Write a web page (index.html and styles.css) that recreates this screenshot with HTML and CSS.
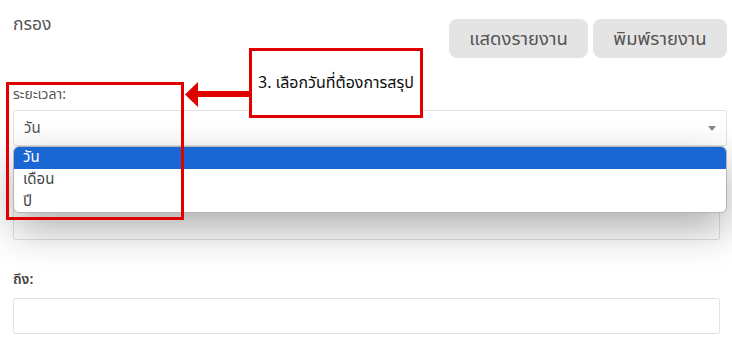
FILE: index.html
```html
<!DOCTYPE html>
<html lang="th">
<head>
<meta charset="utf-8">
<link rel="stylesheet" href="styles.css">
</head>
<body>
<div class="page">
  <div class="header">
    <h2 class="title">กรอง</h2>
    <div class="actions">
      <button class="btn btn-show">แสดงรายงาน</button>
      <button class="btn btn-print">พิมพ์รายงาน</button>
    </div>
  </div>

  <div class="field field-period">
    <label class="label">ระยะเวลา:</label>
    <div class="select">
      <span class="select-value">วัน</span>
      <span class="caret"></span>
    </div>
    <ul class="dropdown">
      <li class="option active">วัน</li>
      <li class="option">เดือน</li>
      <li class="option">ปี</li>
    </ul>
  </div>

  <div class="field field-from">
    <label class="label">จาก:</label>
    <div class="input"></div>
  </div>

  <div class="field field-to">
    <label class="label label-bold">ถึง:</label>
    <div class="input"></div>
  </div>

  <div class="hl-box"></div>
  <svg class="hl-arrow" width="66" height="26" viewBox="0 0 66 26">
    <polygon points="0,12.5 13,0 13,9 66,9 66,15 13,15 13,25" fill="#e00000"/>
  </svg>
  <div class="note">3. เลือกวันที่ต้องการสรุป</div>
</div>
</body>
</html>
```

FILE: styles.css
```css
* { box-sizing: border-box; }
html, body { margin: 0; padding: 0; background: #fff; }
body {
  font-family: "Noto Sans Thai", "Noto Sans", "DejaVu Sans", sans-serif;
  color: #555;
  width: 732px;
  height: 357px;
  overflow: hidden;
}
.page {
  position: relative;
  padding: 0 5px 0 13px;
}
.header {
  display: flex;
  justify-content: space-between;
  align-items: flex-start;
  height: 82px;
}
.title {
  margin: 13px 0 0 0;
  font-size: 17.5px;
  font-weight: 400;
  color: #555;
  line-height: 24px;
}
.actions {
  display: flex;
  gap: 5px;
  margin-top: 19px;
}
.btn {
  font-family: inherit;
  font-size: 18.5px;
  color: #555;
  background: #e4e4e4;
  border: none;
  border-radius: 8px;
  height: 39px;
  padding: 0;
}
.btn-show { width: 139px; }
.btn-print { width: 134px; }

.field { position: relative; }
.label {
  display: block;
  font-size: 14px;
  color: #555;
  line-height: 20px;
}
.field-period { padding-top: 3px; }
.field-period .label { margin-bottom: 5px; }
.select {
  height: 36px;
  border: 1px solid #e2e2e2;
  border-radius: 2px;
  display: flex;
  align-items: center;
  justify-content: space-between;
  padding: 0 10px 0 10px;
  font-size: 15px;
  color: #555;
}
.caret {
  width: 0; height: 0;
  border-left: 4px solid transparent;
  border-right: 4px solid transparent;
  border-top: 5px solid #888;
}
.dropdown {
  position: absolute;
  left: 0;
  right: 0;
  top: 64px;
  margin: 0;
  padding: 0;
  list-style: none;
  background: #fff;
  border: 1px solid #b5b5b5;
  border-radius: 6px;
  overflow: hidden;
  box-shadow: 0 16px 40px rgba(0,0,0,0.32);
  z-index: 5;
}
.option {
  height: 22px;
  line-height: 22px;
  padding-left: 9px;
  font-size: 15px;
  color: #444;
}
.option:last-child { height: 21px; }
.option.active { background: #1a66d2; color: #fff; }

.input {
  height: 36px;
  border: 1px solid #e2e2e2;
  border-radius: 2px;
  margin-right: 7px;
  background: #fff;
}
.field-from { padding-top: 27px; }
.field-from .label { margin-bottom: 11px; }
.field-to { padding-top: 30px; }
.field-to .label { margin-bottom: 8px; }
.label-bold { font-weight: 600; color: #444; }

.hl-box {
  position: absolute;
  left: 6px;
  top: 82px;
  width: 178px;
  height: 138px;
  border: 3px solid #e00000;
  z-index: 6;
}
.hl-arrow {
  position: absolute;
  left: 185px;
  top: 82px;
  z-index: 6;
}
.note {
  position: absolute;
  left: 249px;
  top: 48px;
  width: 174px;
  height: 70px;
  border: 3px solid #e00000;
  background: #fff;
  color: #111;
  font-size: 16px;
  display: flex;
  align-items: center;
  justify-content: center;
  z-index: 6;
}
```
